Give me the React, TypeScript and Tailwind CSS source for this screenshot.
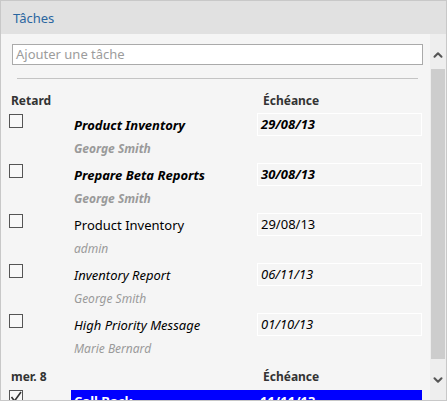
import { ChevronUp, ChevronDown } from 'lucide-react'

interface Task {
  title: string
  owner: string
  due: string
  style: 'bold' | 'normal' | 'italic'
}

const overdue: Task[] = [
  { title: 'Product Inventory', owner: 'George Smith', due: '29/08/13', style: 'bold' },
  { title: 'Prepare Beta Reports', owner: 'George Smith', due: '30/08/13', style: 'bold' },
  { title: 'Product Inventory', owner: 'admin', due: '29/08/13', style: 'normal' },
  { title: 'Inventory Report', owner: 'George Smith', due: '06/11/13', style: 'italic' },
  { title: 'High Priority Message', owner: 'Marie Bernard', due: '01/10/13', style: 'italic' },
]

function Checkbox({ checked }: { checked?: boolean }) {
  return (
    <div className="w-[14px] h-[14px] border border-[#555] bg-[#f8f8f8] flex items-center justify-center">
      {checked && (
        <svg width="12" height="12" viewBox="0 0 12 12">
          <path d="M1.5 6 L4.5 10 L11 1" fill="none" stroke="#333" strokeWidth="1.6" />
        </svg>
      )}
    </div>
  )
}

function TaskRow({ t }: { t: Task }) {
  const main =
    t.style === 'bold' ? 'font-bold italic' : t.style === 'italic' ? 'italic' : ''
  const sub = t.style === 'bold' ? 'font-bold italic' : 'italic'
  return (
    <div className="flex h-[50px]">
      <div className="w-[70px] pl-[8px] pt-[1px]">
        <Checkbox />
      </div>
      <div className="w-[186px] pl-[3px]">
        <div className={`h-[24px] pt-px flex items-center text-[13px] text-black ${main}`}>{t.title}</div>
        <div className={`h-[23px] flex items-center text-[12px] text-[#9a9a9a] ${sub}`}>{t.owner}</div>
      </div>
      <div className={`w-[165px] h-[23px] border border-white flex items-center pl-[3px] pt-px text-[13px] text-black ${main}`}>
        {t.due}
      </div>
    </div>
  )
}

export default function App() {
  return (
    <div className="w-[447px] h-[401px] border border-[#c8c8c8] bg-[#f5f5f5] flex flex-col overflow-hidden" style={{ fontFamily: '"Noto Sans", "Open Sans", sans-serif' }}>
      {/* Header */}
      <div className="h-[33px] shrink-0 bg-[#e1e1e1] flex items-center pl-[12px] pt-[2px] text-[13px] text-[#2a66a0]">
        Tâches
      </div>

      <div className="flex flex-1 min-h-0">
        {/* Task list */}
        <div className="flex-1 min-w-0">
          <div className="mt-[10px] ml-[11px] w-[411px] h-[21px] border border-[#aaa] bg-white flex items-center pl-[3px] text-[13px] text-[#9c9c9c]">
            Ajouter une tâche
          </div>
          <div className="mt-[13px] ml-[16px] w-[401px] h-px bg-[#c4c4c4]" />

          <div className="mt-[12px] flex h-[20px] items-center text-[12px] font-bold text-[#333]">
            <div className="w-[256px] pl-[10px]">Retard</div>
            <div className="pl-[6px]">Échéance</div>
          </div>
          <div className="mt-[2px]">
            {overdue.map((t, i) => (
              <TaskRow key={i} t={t} />
            ))}
          </div>

          <div className="flex h-[27px] items-center text-[12px] font-bold text-[#333]">
            <div className="w-[256px] pl-[10px]">mer. 8</div>
            <div className="pl-[6px]">Échéance</div>
          </div>
          <div className="flex h-[50px]">
            <div className="w-[70px] pl-[8px]">
              <Checkbox checked />
            </div>
            <div className="w-[351px] h-[23px] bg-[#0000ff] flex items-center pt-[1px] text-[13px] font-bold text-white">
              <div className="w-[186px] pl-[3px]">Call Back</div>
              <div className="pl-[3px]">11/11/13</div>
            </div>
          </div>
        </div>

        {/* Scrollbar */}
        <div className="w-[16px] shrink-0 bg-[#eeeeee] flex flex-col">
          <div className="h-[35px] flex items-end justify-center pb-[7px] text-[#555]">
            <ChevronUp size={14} strokeWidth={3.5} />
          </div>
          <div className="h-[290px] mx-px bg-[#cdcdcd]" />
          <div className="flex-1 flex items-center justify-center text-[#555]">
            <ChevronDown size={14} strokeWidth={3.5} />
          </div>
        </div>
      </div>
    </div>
  )
}
